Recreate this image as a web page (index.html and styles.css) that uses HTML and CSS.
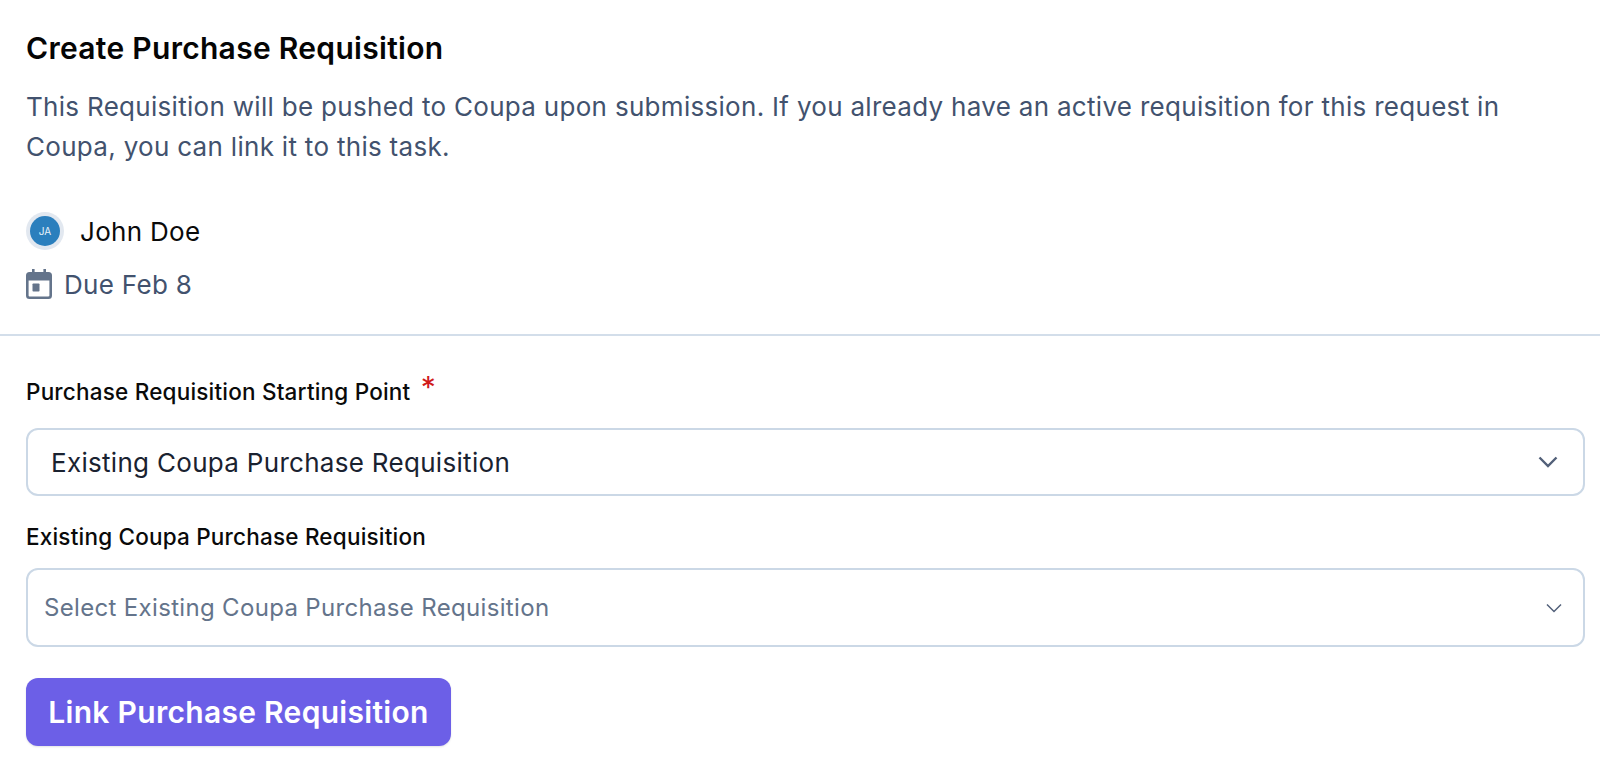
FILE: index.html
```html
<!DOCTYPE html>
<html lang="en">
<head>
<meta charset="utf-8">
<title>Create Purchase Requisition</title>
<link rel="stylesheet" href="styles.css">
</head>
<body>
<section class="head">
  <h1 class="title">Create Purchase Requisition</h1>
  <p class="desc">This Requisition will be pushed to Coupa upon submission. If you already have an active requisition for this request in Coupa, you can link it to this task.</p>
  <div class="assignee">
    <span class="avatar"><span class="avatar-in">JA</span></span>
    <span class="name">John Doe</span>
  </div>
  <div class="due">
    <svg class="cal" viewBox="0 0 26 30" aria-hidden="true">
      <path fill="#64748b" d="M6 0h2.600v3h8.800V0H20v3h2.500A3.500 3.500 0 0 1 26 6.500v20a3.500 3.500 0 0 1-3.500 3.500h-19A3.500 3.500 0 0 1 0 26.500v-20A3.500 3.500 0 0 1 3.500 3H6zM2.600 11.500v15c0 .5.4.9.9.9h19c.5 0 .9-.4.9-.9v-15z"/>
      <rect fill="#64748b" x="6.500" y="14.500" width="7" height="8" rx=".8"/>
    </svg>
    <span>Due Feb 8</span>
  </div>
</section>
<form class="form">
  <label class="label label-first">Purchase Requisition Starting Point <span class="req">*</span></label>
  <div class="select select-a">
    <span>Existing Coupa Purchase Requisition</span>
    <svg class="chev-a" viewBox="0 0 20 12" aria-hidden="true"><path d="M1.500 1.500l8.500 8.500 8.500-8.500" fill="none" stroke="#526079" stroke-width="2.400"/></svg>
  </div>
  <label class="label label-second">Existing Coupa Purchase Requisition</label>
  <div class="select select-b">
    <span>Select Existing Coupa Purchase Requisition</span>
    <svg class="chev-b" viewBox="0 0 16 10" aria-hidden="true"><path d="M1 1.500l7 7 7-7" fill="none" stroke="#526079" stroke-width="1.500"/></svg>
  </div>
  <button class="btn" type="button">Link Purchase Requisition</button>
</form>
</body>
</html>
```
FILE: styles.css
```css
* { box-sizing: border-box; }
html, body { margin: 0; background: #fff; }
body { height: 772px; overflow: hidden; font-family: Inter, "Liberation Sans", sans-serif; color: #0f172a; }
.head { padding: 31px 15px 0 26px; height: 336px; border-bottom: 2px solid #d3deea; }
.title { margin: 0; font-size: 30px; letter-spacing: .3px; line-height: 35px; font-weight: 600; color: #050505; }
.desc { margin: 21px 0 0; font-size: 26px; letter-spacing: .3px; line-height: 40px; color: #42526e; }
.assignee { display: flex; align-items: center; margin-top: 45px; height: 38px; }
.avatar { width: 38px; height: 38px; border-radius: 50%; background: #e2e8f0; display: flex; align-items: center; justify-content: center; }
.avatar-in { width: 30px; height: 30px; border-radius: 50%; background: #2b7fbd; color: #e8f2fa; font-size: 10px; display: flex; align-items: center; justify-content: center; }
.name { margin-left: 16px; font-size: 26px; letter-spacing: .3px; color: #0a0a0a; }
.due { display: flex; align-items: center; gap: 12px; margin-top: 19px; height: 30px; font-size: 26px; letter-spacing: .3px; color: #42526e; }
.cal { width: 26px; height: 30px; }
.form { padding: 0 15px 0 26px; }
.label { display: block; font-size: 22.500px; letter-spacing: .2px; line-height: 28px; font-weight: 450; color: #0a0a0a; }
.label-first { margin-top: 42px; }
.label-second { margin-top: 27px; }
.req { color: #d01a1a; font-size: 30px; font-weight: 400; margin-left: 4px; vertical-align: 2px; line-height: 0; }
.select { display: flex; align-items: center; justify-content: space-between; background: #fff; border: 2px solid #cbd8e6; border-radius: 12px; }
.select-a { height: 68px; margin-top: 22px; padding: 0 25px 0 23px; font-size: 26px; letter-spacing: .3px; color: #1a2230; }
.select-b { height: 79px; margin-top: 17px; padding: 0 21px 0 16px; font-size: 24px; letter-spacing: .33px; color: #64748b; }
.chev-a { width: 20px; height: 12px; }
.chev-b { width: 16px; height: 10px; }
.btn { display: block; margin-top: 31px; width: 425px; height: 68px; padding: 0; border: 0; border-radius: 12px; background: #6c5fe7; color: #fff; font: 600 30px Inter, "Liberation Sans", sans-serif; letter-spacing: .3px; box-shadow: 0 1px 2px rgba(15,23,42,.12); }
```
